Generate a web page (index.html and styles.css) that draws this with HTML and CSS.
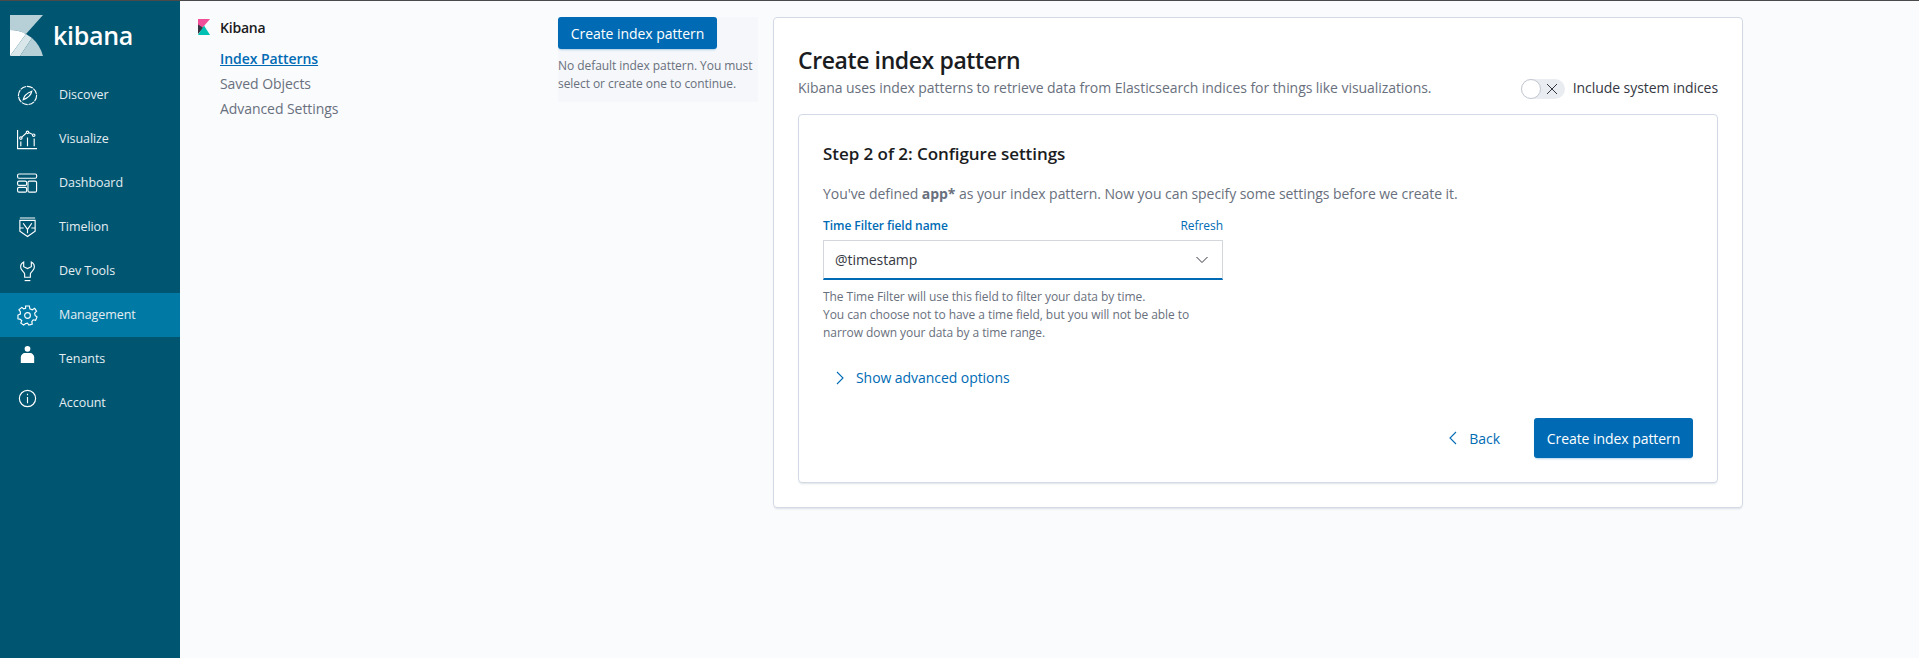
FILE: index.html
```html
<!DOCTYPE html>
<html lang="en">
<head>
    <meta charset="UTF-8">
    <title>Create index pattern - Kibana</title>
    <link rel="stylesheet" href="styles.css">
</head>
<body>
    <nav class="sidebar">
        <div class="brand">
            <svg class="brand-logo" width="33" height="41" viewBox="0 0 33 41">
                <path d="M0 0H33L16 19Q9 15 0 15Z" fill="#b7cfd7"/>
                <path d="M0 15Q9 15 16 19L0 41Z" fill="#fff"/>
                <path d="M16 19Q19 21 22 23L10 41H0Z" fill="#d9e6ea"/>
                <path d="M22 23Q30 30 33 41H10Z" fill="#b7cfd7"/>
            </svg>
            <span class="brand-name">kibana</span>
        </div>
        <a class="nav-item">
            <svg class="nav-icon" viewBox="0 0 22 22"><circle cx="11" cy="11" r="9.5" stroke-dasharray="6.500 0.800"/><path d="M15.500 6.500C15 10 13 13 6.500 15.500C7 12 9 9 15.500 6.500Z"/></svg>
            <span>Discover</span>
        </a>
        <a class="nav-item">
            <svg class="nav-icon" viewBox="0 0 22 22"><path d="M.6 1V20.500H21"/><path d="M4 13V18M11 9V18M18 10V18"/><path d="M5 8.500L9.500 4.500M12.500 4L16 5.500"/><circle cx="4" cy="9.500" r="1.300"/><circle cx="11" cy="3.500" r="1.300"/><circle cx="17.500" cy="6.500" r="1.300"/></svg>
            <span>Visualize</span>
        </a>
        <a class="nav-item">
            <svg class="nav-icon" viewBox="0 0 22 22"><rect x=".6" y="1" width="20" height="4.500" rx="1.500"/><rect x=".6" y="8.500" width="9.500" height="4.500" rx="1.500"/><rect x=".6" y="15" width="9.500" height="5" rx="1.500"/><rect x="11.500" y="8.500" width="9" height="11.500" rx="1.500"/></svg>
            <span>Dashboard</span>
        </a>
        <a class="nav-item">
            <svg class="nav-icon" viewBox="0 0 22 22"><path d="M3 1H19M3 3.500H19V15L11 20.500L3 15Z"/><path d="M6.500 6.500L11 13L15.500 6.500M11 13V17"/><path d="M3 11.500H7M15 11.500H19"/></svg>
            <span>Timelion</span>
        </a>
        <a class="nav-item">
            <svg class="nav-icon" viewBox="0 0 22 22"><path d="M7 1C4 2.500 3.500 5 4 7.500C4.500 10 7.500 11.500 8 13.500V17H14V13.500C14.500 11.500 17.500 10 18 7.500C18.500 5 18 2.500 15 1V6L11 8L7 6Z"/><path d="M8 20.500H14"/></svg>
            <span>Dev Tools</span>
        </a>
        <a class="nav-item active">
            <svg class="nav-icon" viewBox="0 0 22 22"><circle cx="11" cy="11" r="3"/><path d="M9 1H13L13.500 4L16 5L18.500 3.500L20.500 6.500L18.500 8.500L19 11L21 12.500L19.500 16L17 15.500L15.500 17.500L16 20L12.500 21L11 19L9 19.500L7 21L4 19L5 16.500L3.500 15L1 14.500L1 10.500L3.500 9.500L3.500 7L2 5L5 2.500L7 4L9 3.500Z"/></svg>
            <span>Management</span>
        </a>
        <a class="nav-item">
            <svg class="nav-icon solid raised" viewBox="0 0 22 22"><circle cx="11" cy="5" r="3"/><path d="M4 20V14C4 11.500 6.500 9.500 8 9.500H14C15.500 9.500 18 11.500 18 14V20Z"/></svg>
            <span>Tenants</span>
        </a>
        <a class="nav-item">
            <svg class="nav-icon raised" viewBox="0 0 22 22"><circle cx="11" cy="11" r="8.500"/><path d="M11 9.500V16M11 6V7.500"/></svg>
            <span>Account</span>
        </a>
    </nav>

    <aside class="subnav">
        <div class="subnav-title">
            <svg width="12" height="16" viewBox="0 0 12 16">
                <path d="M0 0H12L0 14Z" fill="#f04e98"/>
                <path d="M0 5.500L5.500 9L0 15Z" fill="#343741"/>
                <path d="M6 6.500L12 16H0Z" fill="#00bfb3"/>
            </svg>
            <span>Kibana</span>
        </div>
        <a class="subnav-link selected">Index Patterns</a>
        <a class="subnav-link">Saved Objects</a>
        <a class="subnav-link">Advanced Settings</a>
    </aside>

    <section class="patterns">
        <button class="btn-fill">Create index pattern</button>
        <p class="patterns-note">No default index pattern. You must select or create one to continue.</p>
    </section>

    <main class="panel">
        <header class="panel-head">
            <div>
                <h1>Create index pattern</h1>
                <p class="panel-sub">Kibana uses index patterns to retrieve data from Elasticsearch indices for things like visualizations.</p>
            </div>
            <div class="switch-row">
                <span class="switch">
                    <span class="switch-knob"></span>
                    <svg width="12" height="12" viewBox="0 0 12 12"><path d="M1 1L11 11M11 1L1 11"/></svg>
                </span>
                <span class="switch-label">Include system indices</span>
            </div>
        </header>

        <div class="step">
            <h2>Step 2 of 2: Configure settings</h2>
            <p class="step-intro">You've defined <strong>app*</strong> as your index pattern. Now you can specify some settings before we create it.</p>

            <div class="field">
                <div class="field-labels">
                    <label>Time Filter field name</label>
                    <a class="refresh">Refresh</a>
                </div>
                <div class="select">
                    <span>@timestamp</span>
                    <svg width="14" height="8" viewBox="0 0 14 8"><path d="M1.500 1L7 6.500L12.500 1"/></svg>
                </div>
                <p class="field-help">The Time Filter will use this field to filter your data by time.<br>You can choose not to have a time field, but you will not be able to narrow down your data by a time range.</p>
            </div>

            <a class="advanced">
                <svg width="8" height="14" viewBox="0 0 8 14"><path d="M1 1L7 7L1 13"/></svg>
                <span>Show advanced options</span>
            </a>

            <div class="step-actions">
                <a class="btn-back">
                    <svg width="8" height="14" viewBox="0 0 8 14"><path d="M7 1L1 7L7 13"/></svg>
                    <span>Back</span>
                </a>
                <button class="btn-fill btn-tall">Create index pattern</button>
            </div>
        </div>
    </main>
</body>
</html>
```

FILE: styles.css
```css
* {
    box-sizing: border-box;
}

html, body {
    height: 100%;
}

body {
    margin: 0;
    border-top: 1px solid #4a4a4a;
    background-color: #fafbfd;
    font-family: "Open Sans", sans-serif;
    font-size: 14px;
    letter-spacing: -0.06px;
    color: #343741;
    display: flex;
    align-items: flex-start;
    overflow: hidden;
}

/* left nav */
.sidebar {
    width: 180px;
    height: 100%;
    flex: none;
    background-color: #005571;
    color: #e4eef2;
    font-size: 12.5px;
}

.brand {
    height: 72px;
    padding: 14px 0 0 10px;
    display: flex;
    align-items: flex-start;
    gap: 10px;
}

.brand-name {
    font-size: 25px;
    font-weight: 600;
    line-height: 40px;
    letter-spacing: -0.3px;
    color: #fff;
}

.nav-item {
    height: 44px;
    display: flex;
    align-items: center;
    padding-left: 17px;
    gap: 21px;
}

.nav-item span {
    margin-bottom: 2px;
}

.nav-item.active {
    background-color: #0079a5;
}

.nav-icon {
    width: 21px;
    height: 21px;
    flex: none;
    fill: none;
    stroke: #fff;
    stroke-width: 1.2;
}

.nav-icon.solid {
    fill: #fff;
    stroke: none;
}

.nav-icon.raised {
    margin-bottom: 10px;
}

/* management sub nav */
.subnav {
    width: 378px;
    flex: none;
    padding: 16px 0 0 18px;
}

.subnav-title {
    display: flex;
    align-items: center;
    gap: 10px;
    height: 20px;
    margin-bottom: 9px;
    color: #1a1c21;
    font-weight: 600;
    letter-spacing: -0.2px;
}

.subnav-link {
    display: block;
    margin-left: 22px;
    line-height: 25px;
    color: #69707d;
}

.subnav-link.selected {
    color: #006bb4;
    font-weight: 600;
    text-decoration: underline;
}

/* index pattern list */
.patterns {
    width: 200px;
    height: 85px;
    flex: none;
    margin-top: 16px;
    background-color: #f5f7fa;
}

.btn-fill {
    display: block;
    width: 159px;
    height: 32px;
    padding: 0;
    border: none;
    border-radius: 3px;
    background-color: #006bb4;
    color: #fff;
    font-family: inherit;
    font-size: 14px;
    letter-spacing: inherit;
    box-shadow: 0 2px 2px -1px rgba(0, 107, 180, 0.3);
}

.btn-tall {
    height: 40px;
}

.patterns-note {
    margin: 8px 0 0;
    font-size: 12px;
    line-height: 18px;
    color: #69707d;
}

/* main panel */
.panel {
    width: 970px;
    height: 491px;
    flex: none;
    margin: 16px 0 0 15px;
    padding: 24px 24px 24px;
    background-color: #fff;
    border: 1px solid #d3dae6;
    border-radius: 4px;
    box-shadow: 0 2px 2px -1px rgba(152, 162, 179, 0.3);
}

.panel-head {
    display: flex;
    justify-content: space-between;
    align-items: flex-end;
    margin-bottom: 15px;
}

h1 {
    margin: 0;
    font-size: 23px;
    line-height: 36px;
    font-weight: 600;
    color: #1a1c21;
    letter-spacing: -0.4px;
}

.panel-sub {
    margin: 0;
    line-height: 19px;
    padding-bottom: 2px;
    color: #69707d;
}

.switch-row {
    display: flex;
    align-items: center;
    gap: 8px;
    height: 21px;
}

.switch-label {
    margin-bottom: 2px;
}

.switch {
    width: 44px;
    height: 20px;
    position: relative;
    display: flex;
    align-items: center;
    justify-content: flex-end;
    padding-right: 7px;
    background-color: #e9ecf1;
    border-radius: 10px;
}

.switch svg {
    fill: none;
    stroke: #343741;
    stroke-width: 1;
}

.switch-knob {
    position: absolute;
    left: 0;
    top: 0;
    width: 20px;
    height: 20px;
    background-color: #fff;
    border: 1px solid #c2c7d0;
    border-radius: 50%;
}

.step {
    height: 369px;
    padding: 25px 24px 0;
    background-color: #fff;
    border: 1px solid #d3dae6;
    border-radius: 4px;
    box-shadow: 0 2px 2px -1px rgba(152, 162, 179, 0.3);
}

h2 {
    margin: 0;
    font-size: 17px;
    line-height: 28px;
    font-weight: 600;
    color: #1a1c21;
}

.step-intro {
    margin: 15px 0 0;
    line-height: 21px;
    color: #69707d;
}

.field {
    width: 400px;
    margin-top: 13px;
}

.field-labels {
    display: flex;
    justify-content: space-between;
    font-size: 12px;
    line-height: 18px;
    margin-bottom: 5px;
}

.field-labels label {
    font-weight: 600;
    color: #006bb4;
}

.refresh {
    color: #006bb4;
}

.select {
    height: 40px;
    display: flex;
    align-items: center;
    justify-content: space-between;
    padding: 0 13px 0 11px;
    border: 1px solid #d3d6da;
    border-bottom: 2px solid #006bb4;
    color: #343741;
}

.select svg {
    fill: none;
    stroke: #343741;
    stroke-width: 1;
}

.field-help {
    margin: 8px 0 0;
    font-size: 12px;
    line-height: 18px;
    color: #69707d;
}

.advanced {
    display: flex;
    align-items: center;
    gap: 12px;
    margin: 25px 0 0 13px;
    line-height: 21px;
    color: #006bb4;
}

.advanced svg,
.btn-back svg {
    fill: none;
    stroke: #006bb4;
    stroke-width: 1.1;
}

.step-actions {
    display: flex;
    justify-content: flex-end;
    align-items: center;
    margin-top: 30px;
    gap: 34px;
}

.btn-back {
    display: flex;
    align-items: center;
    gap: 12px;
    color: #006bb4;
}
```
